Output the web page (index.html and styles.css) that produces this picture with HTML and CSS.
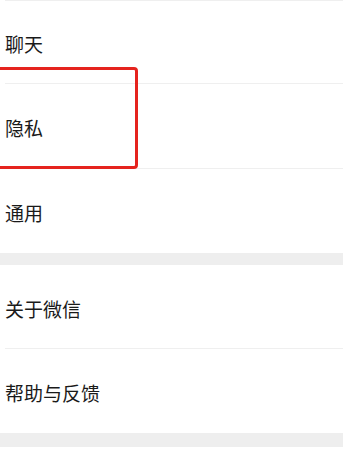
FILE: index.html
```html
<!DOCTYPE html>
<html lang="zh-CN">
<head>
    <meta charset="UTF-8">
    <meta name="viewport" content="width=device-width, initial-scale=1.0">
    <title>设置</title>
    <link rel="stylesheet" href="styles.css">
</head>
<body>

    <div class="group first">
        <div class="cell"><span class="label">聊天</span></div>
        <div class="cell marked">
            <span class="label">隐私</span>
            <span class="highlight"></span>
        </div>
        <div class="cell"><span class="label">通用</span></div>
    </div>

    <div class="gap"></div>

    <div class="group">
        <div class="cell"><span class="label">关于微信</span></div>
        <div class="cell"><span class="label">帮助与反馈</span></div>
    </div>

    <div class="gap last"></div>

</body>
</html>
```

FILE: styles.css
```css
body {
    margin: 0;
    background: #fff;
    font-family: "Noto Sans CJK SC", "Noto Sans", sans-serif;
    color: #1a1a1a;
}

.group {
    background: #fff;
}

/* 顶部那条分割线 */
.group.first {
    border-top: 1px solid #efefef;
    margin-left: 5px;
}

.group.first .cell {
    margin-left: 0;
}

.cell {
    position: relative;
    margin-left: 5px;
    height: 84px;
    display: flex;
    align-items: center;
    border-bottom: 1px solid #efefef;
}

.cell:first-child {
    height: 82px;
}

.cell:last-child {
    border-bottom: none;
}

.group:not(.first) .cell:first-child {
    height: 83px;
}

.label {
    font-size: 19px;
    line-height: 1;
    padding-top: 3px;
}

.gap {
    height: 12px;
    background: #eeeeee;
}

.gap.last {
    height: 14px;
}

/* 红色标注框 */
.highlight {
    position: absolute;
    left: -18px;
    top: -17px;
    width: 151px;
    height: 102px;
    border: 3px solid #e5231e;
    border-radius: 4px;
    box-sizing: border-box;
}
```
